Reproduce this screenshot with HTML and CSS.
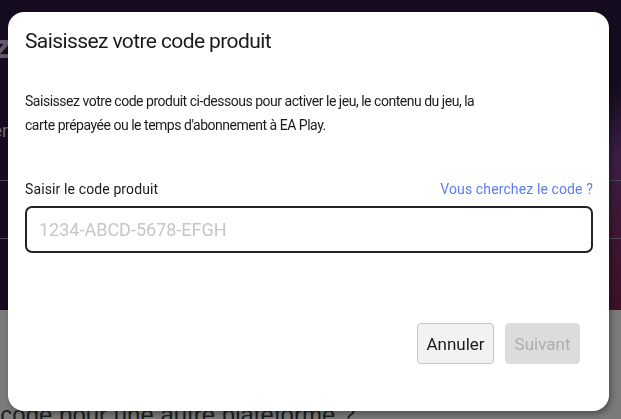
FILE: index.html
```html
<!DOCTYPE html>
<html lang="fr">
<head>
<meta charset="utf-8">
<title>Saisissez votre code produit</title>
<link rel="stylesheet" href="styles.css">
</head>
<body>
<div class="page">
  <section class="hero">
    <div class="hero-title">Échangez</div>
    <div class="hero-text">Saisissez votre code pour activer<br>des jeux et plus encore</div>
    <div class="hero-rule"></div>
    <div class="hero-rule second"></div>
  </section>
  <section class="lower">
    <div class="lower-title">Un code pour une autre plateforme ?</div>
  </section>
</div>

<div class="modal" role="dialog" aria-labelledby="modal-title">
  <h1 class="modal-title" id="modal-title">Saisissez votre code produit</h1>
  <p class="modal-desc">Saisissez votre code produit ci-dessous pour activer le jeu, le contenu du jeu, la carte prépayée ou le temps d'abonnement à EA Play.</p>
  <div class="field-head">
    <label class="field-label" for="code">Saisir le code produit</label>
    <a class="field-link" href="#">Vous cherchez le code ?</a>
  </div>
  <input class="field-input" id="code" type="text" placeholder="1234-ABCD-5678-EFGH">
  <div class="actions">
    <button class="btn btn-secondary" type="button">Annuler</button>
    <button class="btn btn-primary" type="button" disabled>Suivant</button>
  </div>
</div>
</body>
</html>
```

FILE: styles.css
```css
* { box-sizing: border-box; }
html, body { margin: 0; padding: 0; }
body {
  width: 621px;
  height: 419px;
  overflow: hidden;
  font-family: "Roboto", "Liberation Sans", sans-serif;
  background: #7b7b7b;
}
.page {
  display: flex;
  flex-direction: column;
  height: 419px;
}
.hero {
  height: 310px;
  padding-top: 26px;
  background:
    linear-gradient(158deg, rgba(0,0,0,0) 0%, rgba(0,0,0,0) 60%, #3a1f44 72%, #3d1633 86%, #3b1227 100%),
    #160c1f;
  overflow: hidden;
}
.hero-title {
  margin-left: -133px;
  font-size: 34px;
  line-height: 40px;
  font-weight: 700;
  font-style: italic;
  color: #625d6b;
}
.hero-text {
  margin: 52px 0 0 -255px;
  font-size: 18px;
  line-height: 26px;
  color: #6d6876;
}
.hero-rule {
  margin-top: 10px;
  height: 1px;
  background: #4f4a58;
}
.hero-rule.second { margin-top: 57px; }
.lower {
  flex: 1;
  display: flex;
  align-items: flex-end;
  background: #7b7b7b;
}
.lower-title {
  margin: 0 0 -9px -37px;
  font-family: "Liberation Sans", sans-serif;
  font-size: 24px;
  line-height: 26px;
  color: #1e1e1e;
  white-space: nowrap;
}

.modal {
  position: fixed;
  left: 8px;
  top: 12px;
  width: 601px;
  height: 399px;
  background: #ffffff;
  border-radius: 16px;
  box-shadow: 2px 3px 6px rgba(0,0,0,0.35);
  padding: 15px 16px 0 17px;
  display: flex;
  flex-direction: column;
  color: #1b1b1f;
}
.modal-title {
  margin: 0;
  font-size: 21px;
  font-weight: 400;
  line-height: 28px;
  letter-spacing: -0.6px;
}
.modal-desc {
  margin: 34px 0 0;
  max-width: 455px;
  font-size: 14px;
  line-height: 24px;
  letter-spacing: -0.48px;
}
.field-head {
  margin-top: 43px;
  display: flex;
  justify-content: space-between;
  align-items: baseline;
  font-size: 14px;
  line-height: 18px;
  letter-spacing: 0.12px;
}
.field-label { color: #1b1b1f; }
.field-link { color: #5c7cf2; text-decoration: none; }
.field-input {
  margin-top: 8px;
  height: 47px;
  width: 100%;
  border: 2px solid #232323;
  border-radius: 7px;
  padding: 0 12px;
  font-family: inherit;
  font-size: 18px;
  color: #1b1b1f;
  background: #fff;
  outline: none;
}
.field-input::placeholder { color: #c6c6c8; }
.actions {
  margin-top: 70px;
  padding-right: 13px;
  display: flex;
  justify-content: flex-end;
  gap: 11px;
}
.btn {
  height: 41px;
  padding: 0;
  border-radius: 4px;
  font-family: inherit;
  font-size: 17px;
}
.btn-secondary {
  width: 77px;
  background: #f2f2f3;
  border: 1px solid #c5c5cc;
  color: #1b1b1f;
}
.btn-primary {
  width: 75px;
  background: #dcdcdc;
  border: 1px solid #dcdcdc;
  color: #adadad;
}
```
